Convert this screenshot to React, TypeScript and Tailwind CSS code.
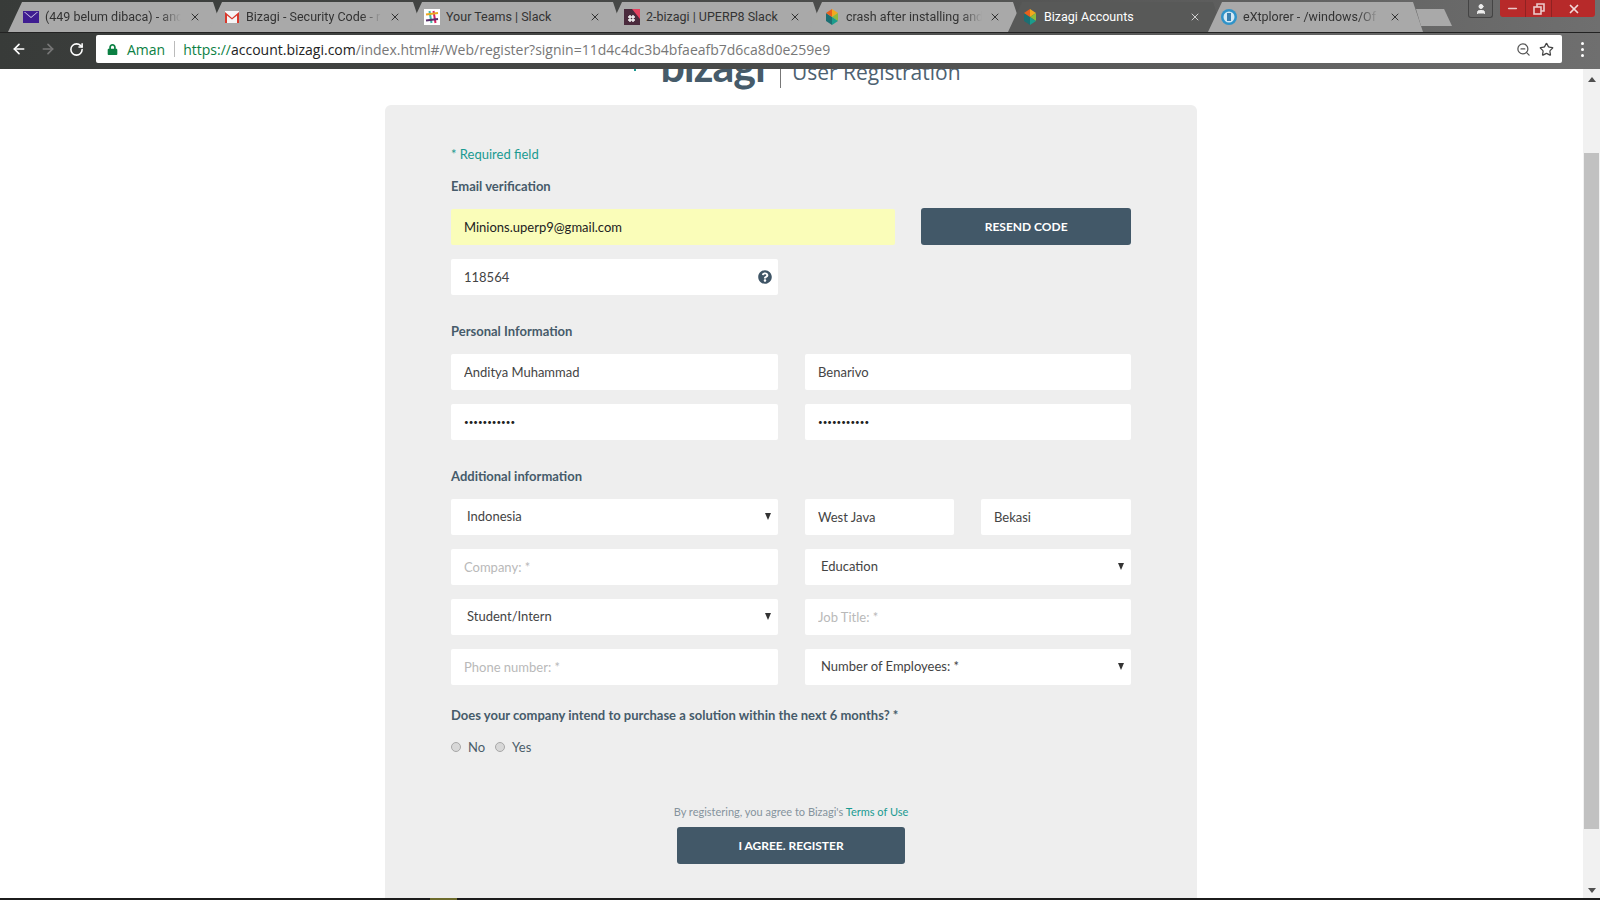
import React from 'react';
import { ArrowLeft, ArrowRight, RotateCw, ZoomOut, Star, User, Minus, X } from 'lucide-react';
import { FaQuestionCircle, FaLock } from 'react-icons/fa';

const YahooIcon = () => (
  <svg width="16" height="16" viewBox="0 0 16 16">
    <rect x="0" y="2" width="16" height="12" fill="#3f1d91" />
    <path d="M1 3 L8 9 L15 3" fill="#d9d4ea" />
    <path d="M2 3 L8 8 L14 3 Z" fill="#3f1d91" />
  </svg>
);

const GmailIcon = () => (
  <svg width="16" height="16" viewBox="0 0 16 16">
    <rect x="1" y="2" width="14" height="12" fill="#f5f5f5" />
    <path d="M1 14 V3 L8 9 L15 3 V14 H13 V6.5 L8 10.5 L3 6.5 V14 Z" fill="#d9392c" />
  </svg>
);

const SlackIcon = () => (
  <svg width="16" height="16" viewBox="0 0 16 16">
    <rect width="16" height="16" fill="#fff" />
    <path d="M5.5 2 L7.5 14" stroke="#3fb8a5" strokeWidth="2" />
    <path d="M9.5 2 L11.5 14" stroke="#d6215f" strokeWidth="2" />
    <path d="M2 5.5 L14 4" stroke="#e9a820" strokeWidth="2" />
    <path d="M2 11.5 L14 10" stroke="#57306b" strokeWidth="2" />
  </svg>
);

const WorkspaceIcon = () => (
  <svg width="16" height="16" viewBox="0 0 16 16">
    <rect width="16" height="16" fill="#4a2a3c" />
    <path d="M8 0 H16 V10 Z" fill="#e4405f" />
    <path d="M6 6 V13 M9 6 V13 M4 8 H11 M4 11 H11" stroke="#f5f5f5" strokeWidth="1.4" />
  </svg>
);

const BizagiIcon = () => (
  <svg width="16" height="16" viewBox="0 0 16 16">
    <path d="M8 0 L14 4 L8 8 Z" fill="#f2a81d" />
    <path d="M14 4 V12 L8 8 Z" fill="#8dbb3a" />
    <path d="M14 12 L8 16 V8 Z" fill="#1b9c8c" />
    <path d="M8 16 L2 12 V4 L8 8 Z" fill="#1c6f73" />
    <path d="M2 4 L8 0 V8 Z" fill="#e8601c" />
  </svg>
);

const ExplorerIcon = () => (
  <svg width="16" height="16" viewBox="0 0 16 16">
    <circle cx="8" cy="8" r="8" fill="#2f93c9" />
    <circle cx="8" cy="8" r="5.5" fill="#d4e9f5" />
    <rect x="6" y="4" width="4" height="8" fill="#3a7fae" />
  </svg>
);

const tabs = [
  { title: '(449 belum dibaca) - and', icon: <YahooIcon />, gap: 'ml-[15px]', fade: true },
  { title: 'Bizagi - Security Code - r', icon: <GmailIcon />, gap: 'ml-[16px]', fade: true },
  { title: 'Your Teams | Slack', icon: <SlackIcon />, gap: 'ml-[16px]', fade: false },
  { title: '2-bizagi | UPERP8 Slack', icon: <WorkspaceIcon />, gap: 'ml-[16px]', fade: false },
  { title: 'crash after installing and', icon: <BizagiIcon />, gap: 'ml-[16px]', fade: true },
  { title: 'Bizagi Accounts', icon: <BizagiIcon />, gap: 'ml-[14px]', fade: false, active: true },
  { title: 'eXtplorer - /windows/Of', icon: <ExplorerIcon />, gap: 'ml-[13px]', fade: true },
];

const inputClass =
  'h-[36px] w-full rounded-[2px] bg-white pl-[13px] pr-2 text-[13px] text-[#444] outline-none placeholder:text-[#b9b9b9]';

const Field = ({ value, placeholder }: { value?: string; placeholder?: string }) => (
  <input type="text" readOnly defaultValue={value} placeholder={placeholder} className={inputClass} />
);

const PasswordField = ({ value }: { value: string }) => (
  <input
    type="password"
    readOnly
    defaultValue={value}
    className="h-[36px] w-full rounded-[2px] bg-white pl-[13px] pr-2 text-[8px] text-[#222] outline-none"
  />
);

const SelectField = ({ value }: { value: string }) => (
  <div className="relative">
    <select
      defaultValue={value}
      className="h-[36px] w-full appearance-none rounded-[2px] bg-white pl-[16px] text-[13px] text-[#444] outline-none"
    >
      <option>{value}</option>
    </select>
    <span className="absolute right-[7px] top-[14px] h-0 w-0 border-x-[3.5px] border-t-[7px] border-x-transparent border-t-[#333]" />
  </div>
);

const SectionLabel = ({ children, className }: { children: React.ReactNode; className: string }) => (
  <div className={`text-[13px] font-bold leading-5 text-[#465b6a] ${className}`}>{children}</div>
);

const Radio = ({ label }: { label: string }) => (
  <label className="flex items-center text-[13px] text-[#4b5d6a]">
    <input
      type="radio"
      name="purchase"
      className="mb-[2px] h-[10px] w-[10px] appearance-none rounded-full border border-[#a8a8a8] bg-[#d8d8d8]"
    />
    <span className="ml-[7px]">{label}</span>
  </label>
);

const BrowserChrome = () => (
  <div className="bg-gradient-to-r from-[#383b39] via-[#4b4c4b] to-[#6f6f6f]">
    {/* Tab strip */}
    <div className="flex h-[32px] items-end pl-[8px] font-['Roboto',sans-serif]">
      {tabs.map((tab) => (
        <div
          key={tab.title}
          className={`-mr-[15px] flex h-[30px] w-[215px] shrink-0 items-center pr-[15px] [clip-path:polygon(0_100%,14px_0,calc(100%-10px)_0,100%_100%)] ${
            tab.active ? 'bg-[#585958] text-white' : 'bg-[#a9a9a9] text-[#333]'
          }`}
        >
          <span className={`shrink-0 ${tab.gap}`}>{tab.icon}</span>
          <span
            className={`ml-[6px] w-[136px] overflow-hidden whitespace-nowrap text-[12.5px] ${
              tab.fade ? '[mask-image:linear-gradient(to_right,black_85%,transparent)]' : ''
            }`}
          >
            {tab.title}
          </span>
          <X size={12} strokeWidth={2} className={`ml-auto mr-[7px] shrink-0 ${tab.active ? 'text-[#cfcfcf]' : 'text-[#333]'}`} />
        </div>
      ))}
      <div className="ml-[8px] mb-[6px] h-[17px] w-[36px] shrink-0 bg-[#a9a9a9] [clip-path:polygon(0_0,78%_0,100%_100%,14%_100%)]" />
      <div className="ml-auto flex self-start">
        <div className="flex h-[18px] w-[25px] items-center justify-center rounded-b-[3px] border border-t-0 border-[#444] bg-[#666]">
          <User size={12} fill="#eee" className="text-[#eee]" />
        </div>
        <div className="ml-[7px] mr-[5px] flex h-[17px] w-[95px] rounded-b-[3px] bg-[#b72a2a] text-white">
          <div className="flex w-[26px] items-center justify-center border-r border-[#8f2222]">
            <Minus size={13} strokeWidth={3} className="text-[#eccaca]" />
          </div>
          <div className="flex w-[26px] items-center justify-center border-r border-[#8f2222]">
            <svg width="12" height="12" viewBox="0 0 12 12" fill="none" stroke="#eccaca" strokeWidth="1.6">
              <rect x="1" y="4" width="7" height="7" />
              <path d="M4 4 V1 H11 V8 H8" />
            </svg>
          </div>
          <div className="flex flex-1 items-center justify-center">
            <X size={14} strokeWidth={3} className="text-[#f3dada]" />
          </div>
        </div>
      </div>
    </div>

    {/* Toolbar */}
    <div className="flex h-[37px] items-start border-t border-[#222] pt-[2px] font-['Open_Sans',sans-serif]">
      <div className="flex h-[28px] w-[96px] shrink-0 items-center pl-[11px]">
        <ArrowLeft size={16} strokeWidth={2.5} className="text-white" />
        <ArrowRight size={16} strokeWidth={2.5} className="ml-[13px] text-[#777]" />
        <RotateCw size={15} strokeWidth={2.5} className="ml-[13px] text-white" />
      </div>
      <div className="flex h-[28px] w-[1466px] shrink-0 items-center rounded-[2px] bg-white pl-[11px] pr-[8px] text-[14px]">
        <FaLock size={11} className="text-[#0b8043]" />
        <span className="ml-[9px] text-[#0b8043]">Aman</span>
        <span className="ml-[9px] h-[16px] w-px bg-[#bbb]" />
        <span className="ml-[8px] whitespace-nowrap">
          <span className="text-[#0b8043]">https://</span>
          <span className="text-[#222]">account.bizagi.com</span>
          <span className="text-[#777]">/index.html#/Web/register?signin=11d4c4dc3b4bfaeafb7d6ca8d0e259e9</span>
        </span>
        <ZoomOut size={15} className="ml-auto text-[#555]" />
        <Star size={15} strokeWidth={2} className="ml-[8px] text-[#444]" />
      </div>
      <div className="ml-[19px] flex h-[28px] flex-col items-center justify-center gap-[3px]">
        <span className="h-[3px] w-[3px] rounded-full bg-white" />
        <span className="h-[3px] w-[3px] rounded-full bg-white" />
        <span className="h-[3px] w-[3px] rounded-full bg-white" />
      </div>
    </div>
  </div>
);

const Scrollbar = () => (
  <div className="flex w-[17px] shrink-0 flex-col items-center bg-[#f1f1f1]">
    <span className="mt-[8px] h-0 w-0 border-x-[4px] border-b-[5px] border-x-transparent border-b-[#505050]" />
    <div className="mt-[71px] h-[676px] w-[15px] bg-[#c1c1c1]" />
    <span className="mt-[59px] h-0 w-0 border-x-[4px] border-t-[5px] border-x-transparent border-t-[#505050]" />
  </div>
);

export default function App() {
  return (
    <div className="flex h-screen w-full flex-col overflow-hidden bg-white">
      <BrowserChrome />

      <div className="flex min-h-0 flex-1">
        <main className="min-w-0 flex-1 overflow-hidden pr-px font-['Lato',sans-serif]">
          {/* Logo row, scrolled partly under the toolbar */}
          <div className="flex h-[36px] justify-center pl-[13px]">
            <span className="mr-[24px] h-[2px] w-[2px] bg-[#1a9a91]" />
            <span className="-mt-[25px] h-[44px] text-[43px] font-bold leading-[44px] tracking-[-1px] text-[#465b6a]">
              bizagi
            </span>
            <span className="ml-[15px] h-[19px] w-px bg-[#777]" />
            <span className="-mt-[12px] ml-[11px] h-[30px] whitespace-nowrap font-['Open_Sans',sans-serif] text-[21px] leading-[30px] text-[#4e6272]">
              User Registration
            </span>
          </div>

          <div className="mx-auto h-[900px] w-[812px] rounded-[6px] bg-[#eeeeee] px-[66px] pt-[39px]">
            <div className="text-[13px] leading-5 text-[#1a9a91]">* Required field</div>

            <SectionLabel className="mt-[12px]">Email verification</SectionLabel>
            <div className="mt-[13px] flex">
              <input
                readOnly
                defaultValue="Minions.uperp9@gmail.com"
                className="h-[36px] w-[445px] rounded-[2px] bg-[#fafdb9] pl-[13px] text-[13px] text-[#222] outline-none"
              />
              <button className="ml-[26px] -mt-px h-[37px] w-[210px] rounded-[3px] bg-[#425868] text-[12px] font-bold text-white">
                RESEND CODE
              </button>
            </div>
            <div className="relative mt-[14px] w-[327px]">
              <Field value="118564" />
              <FaQuestionCircle size={14} className="absolute right-[6px] top-[11px] text-[#3f5566]" />
            </div>

            <SectionLabel className="mt-[26px]">Personal Information</SectionLabel>
            <div className="mt-[13px] grid grid-cols-[327px_326px] gap-x-[27px] gap-y-[14px]">
              <Field value="Anditya Muhammad" />
              <Field value="Benarivo" />
              <PasswordField value="12345678901" />
              <PasswordField value="12345678901" />
            </div>

            <SectionLabel className="mt-[26px]">Additional information</SectionLabel>
            <div className="mt-[13px] grid grid-cols-[327px_326px] gap-x-[27px] gap-y-[14px]">
              <SelectField value="Indonesia" />
              <div className="grid grid-cols-[149px_150px] gap-x-[27px]">
                <Field value="West Java" />
                <Field value="Bekasi" />
              </div>
              <Field placeholder="Company: *" />
              <SelectField value="Education" />
              <SelectField value="Student/Intern" />
              <Field placeholder="Job Title: *" />
              <Field placeholder="Phone number: *" />
              <SelectField value="Number of Employees: *" />
            </div>

            <SectionLabel className="mt-[20px]">Does your company intend to purchase a solution within the next 6 months? *</SectionLabel>
            <div className="mt-[13px] flex h-[20px] gap-x-[10px]">
              <Radio label="No" />
              <Radio label="Yes" />
            </div>

            <div className="mt-[44px] text-center text-[11px] leading-5 text-[#85939d]">
              By registering, you agree to Bizagi's <span className="text-[#1a9a91]">Terms of Use</span>
            </div>
            <button className="mx-auto mt-[5px] block h-[37px] w-[228px] rounded-[3px] bg-[#425868] text-[12px] font-bold text-white">
              I AGREE. REGISTER
            </button>
          </div>
        </main>
        <Scrollbar />
      </div>

      {/* Edge of the taskbar */}
      <div className="flex h-[2px] shrink-0 bg-[#1c1c1c]">
        <span className="ml-[430px] w-[27px] bg-[#6d6b2c]" />
      </div>
    </div>
  );
}
